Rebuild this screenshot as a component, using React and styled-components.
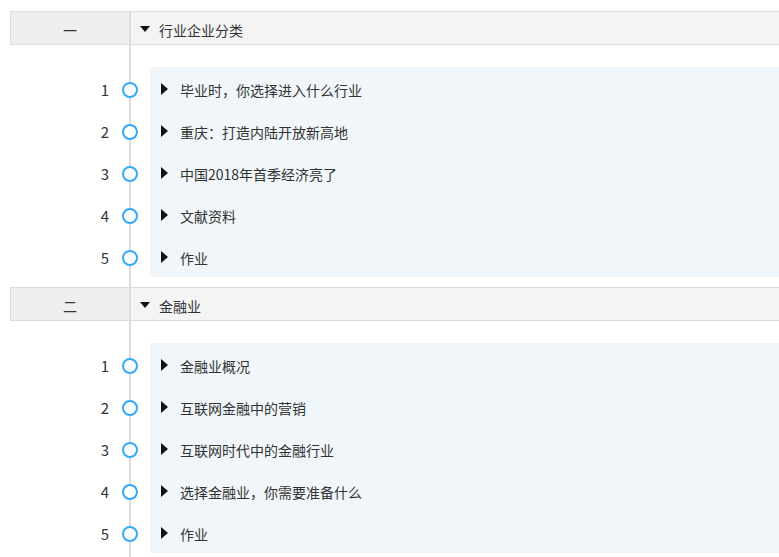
import React from "react";
import styled, { createGlobalStyle } from "styled-components";

const GlobalStyle = createGlobalStyle`
  body {
    margin: 0;
    background: #fff;
    font-family: "Microsoft YaHei", "Noto Sans CJK SC", "Noto Sans", sans-serif;
    color: #333;
    overflow: hidden;
  }
`;

const Timeline = styled.div`
  padding: 11px 0 0 10px;
  min-height: 557px;
  box-sizing: border-box;
  background: linear-gradient(#ddd, #ddd) no-repeat 129px 11px / 2px 100%;
`;

const Section = styled.section`
  display: flex;
  flex-direction: column;
`;

const Header = styled.div`
  display: grid;
  grid-template-columns: 120px 1fr;
  height: 32px;
  border: 1px solid #ddd;
  border-right: none;
  font-size: 14px;
`;

const HeaderIndex = styled.div`
  display: flex;
  align-items: center;
  justify-content: center;
  padding-top: 3px;
  background: #efefef;
  border-right: 2px solid #ddd;
`;

const HeaderTitle = styled.div`
  display: flex;
  align-items: center;
  gap: 9px;
  padding: 3px 0 0 9px;
  background: #f4f4f4;
`;

const Caret = styled.span`
  width: 0;
  height: 0;
  border-style: solid;
  border-color: transparent;
  ${({ $dir }) =>
    $dir === "down"
      ? `border-width: 6px 5.5px 0 5.5px; border-top-color: #111; margin-top: -2px;`
      : `border-width: 6px 0 6px 7px; border-left-color: #111; margin-top: -1px;`}
`;

const List = styled.div`
  margin: 22px 0 10px;
`;

const Row = styled.div`
  display: grid;
  grid-template-columns: 100px 40px 1fr;
  height: 42px;
  font-size: 14px;
`;

const Cell = styled.div`
  display: flex;
  align-items: center;
  padding-top: 3px;
`;

const Num = styled(Cell)`
  justify-content: flex-end;
  padding-right: 1px;
  font-size: 15px;
`;

const DotCell = styled(Cell)`
  justify-content: center;
`;

const Dot = styled.span`
  width: 12px;
  height: 12px;
  border: 2px solid #36a9f7;
  border-radius: 50%;
  background: #fff;
`;

const Content = styled(Cell)`
  gap: 12px;
  padding-left: 11px;
  background: #f0f6f9;
`;

const sections = [
  {
    index: "一",
    title: "行业企业分类",
    items: ["毕业时，你选择进入什么行业", "重庆：打造内陆开放新高地", "中国2018年首季经济亮了", "文献资料", "作业"],
  },
  {
    index: "二",
    title: "金融业",
    items: ["金融业概况", "互联网金融中的营销", "互联网时代中的金融行业", "选择金融业，你需要准备什么", "作业"],
  },
];

export default function App() {
  return (
    <>
      <GlobalStyle />
      <Timeline>
        {sections.map((s) => (
          <Section key={s.index}>
            <Header>
              <HeaderIndex>{s.index}</HeaderIndex>
              <HeaderTitle>
                <Caret $dir="down" />
                {s.title}
              </HeaderTitle>
            </Header>
            <List>
              {s.items.map((item, i) => (
                <Row key={i}>
                  <Num>{i + 1}</Num>
                  <DotCell>
                    <Dot />
                  </DotCell>
                  <Content>
                    <Caret $dir="right" />
                    {item}
                  </Content>
                </Row>
              ))}
            </List>
          </Section>
        ))}
      </Timeline>
    </>
  );
}
